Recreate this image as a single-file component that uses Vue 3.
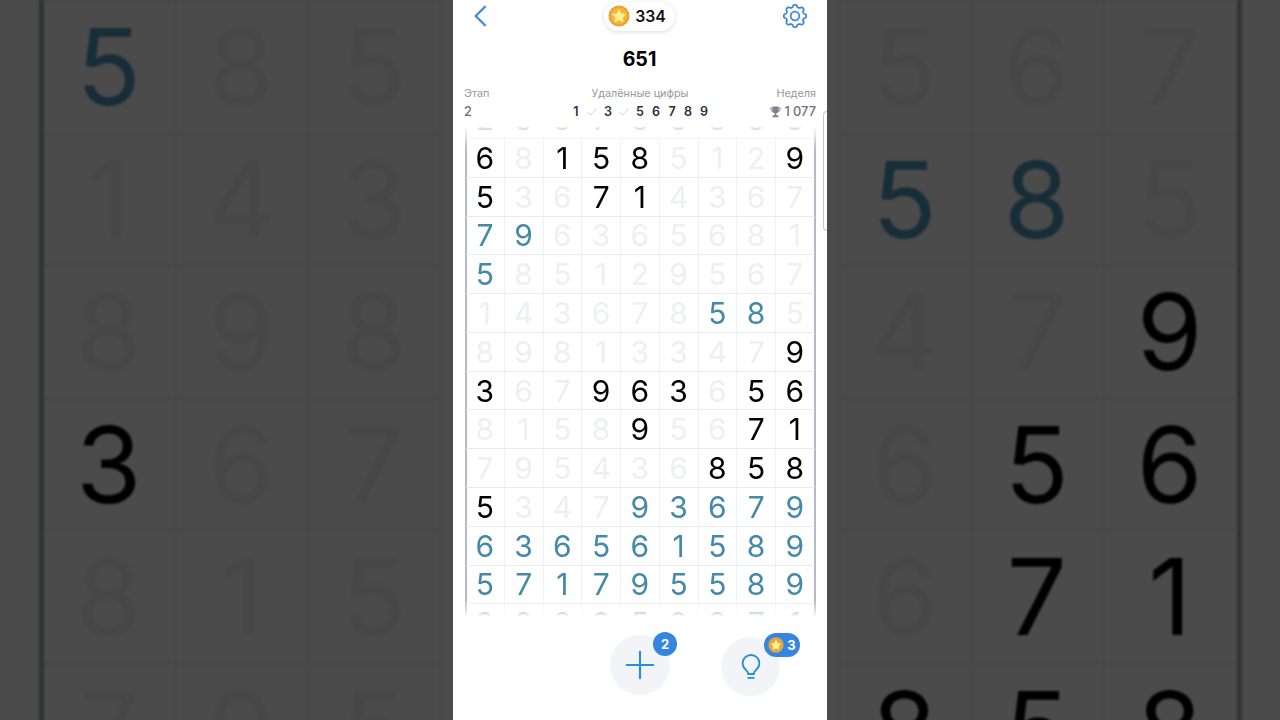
<template>
  <div class="stage">
    <!-- 左侧背景 -->
    <aside class="side side-left">
      <div class="side-board">
        <div v-for="(row, r) in leftRows" :key="r" class="side-row">
          <span v-for="(cell, c) in row" :key="c" class="side-cell" :class="cell.state">{{ cell.value }}</span>
        </div>
      </div>
    </aside>

    <main class="phone">
      <!-- 顶部 -->
      <header class="top-bar">
        <button class="icon-btn" aria-label="Назад">
          <svg width="14" height="22" viewBox="0 0 14 22" fill="none">
            <path d="M12 1.8L2.6 11L12 20.2" stroke="currentColor" stroke-width="2.3" stroke-linecap="round" stroke-linejoin="round" />
          </svg>
        </button>
        <div class="coins">
          <svg class="coin" viewBox="0 0 22 22">
            <circle cx="11" cy="11" r="10.5" fill="#eda12f" />
            <circle cx="11" cy="11" r="8.4" fill="#f3b53c" />
            <path :d="starPath" fill="#fff08a" stroke="#fff08a" stroke-width="1.4" stroke-linejoin="round" />
          </svg>
          <span>334</span>
        </div>
        <button class="icon-btn" aria-label="Настройки">
          <svg width="26" height="26" viewBox="-13 -13 26 26" fill="none" stroke="currentColor" stroke-width="1.8" stroke-linejoin="round">
            <path :d="gearPath" />
            <circle r="4.3" />
          </svg>
        </button>
      </header>

      <div class="score">651</div>

      <!-- 统计信息 -->
      <section class="stats">
        <div class="stat">
          <span class="label">Этап</span>
          <span class="value">2</span>
        </div>
        <div class="stat stat-center">
          <span class="label">Удалённые цифры</span>
          <div class="digits">
            <span v-for="d in digits" :key="d.value" class="digit">
              <svg v-if="d.removed" width="10" height="8" viewBox="0 0 10 8" fill="none">
                <path d="M1 4.4L3.6 7L9 1" stroke="#dfe3e8" stroke-width="1.2" stroke-linecap="round" />
              </svg>
              <template v-else>{{ d.value }}</template>
            </span>
          </div>
        </div>
        <div class="stat stat-right">
          <span class="label">Неделя</span>
          <span class="value trophy-value">
            <svg width="11" height="12" viewBox="0 0 11 12">
              <path d="M2.5 .5h6v1h2.2c0 2.6-.8 4-2.6 4.4-.4.9-1 1.4-1.8 1.6v1.7h1.4c.5 0 .8.4.8 1v1H2.5v-1c0-.6.3-1 .8-1h1.4V7.5C3.9 7.3 3.3 6.8 2.9 5.9 1.1 5.5.3 4.1.3 1.5h2.2z" fill="#7d828c" />
              <path d="M1.2 2.4h1.2v2.3C1.6 4.3 1.3 3.5 1.2 2.4zM9.8 2.4H8.6v2.3c.8-.4 1.1-1.2 1.2-2.3z" fill="#fff" />
            </svg>
            1 077
          </span>
        </div>
      </section>

      <!-- 棋盘 -->
      <section class="board">
        <div class="rows">
          <div v-for="(row, r) in rows" :key="r" class="row">
            <span v-for="(cell, c) in row" :key="c" class="cell" :class="cell.state">{{ cell.value }}</span>
          </div>
        </div>
      </section>

      <!-- 底部操作 -->
      <footer class="actions">
        <button class="round-btn" aria-label="Добавить">
          <svg width="30" height="30" viewBox="0 0 30 30" fill="none">
            <path d="M15 1.8v26.4M1.8 15h26.4" stroke="currentColor" stroke-width="2.1" stroke-linecap="round" />
          </svg>
          <span class="badge badge-add">2</span>
        </button>
        <button class="round-btn hint" aria-label="Подсказка">
          <svg width="20" height="26" viewBox="0 0 20 26" fill="none" stroke="currentColor" stroke-width="1.8" stroke-linecap="round" stroke-linejoin="round">
            <path d="M7 20v-1.2C6.4 16.4 1.6 14.6 1.6 9.4a8.400 8.400 0 0 1 16.800 0c0 5.200-4.800 7-5.400 9.400V20z" />
            <path d="M7.200 23.900h5.600" />
          </svg>
          <span class="badge badge-hint">
            <svg class="coin" viewBox="0 0 22 22">
              <circle cx="11" cy="11" r="10.5" fill="#e3a443" />
              <circle cx="11" cy="11" r="8.4" fill="#e0ac43" />
              <path :d="starPath" fill="#fff08a" stroke="#fff08a" stroke-width="1.4" stroke-linejoin="round" />
            </svg>
            3
          </span>
        </button>
      </footer>

      <div class="edge-handle"></div>
    </main>

    <!-- 右侧背景 -->
    <aside class="side side-right">
      <div class="side-board">
        <div v-for="(row, r) in rightRows" :key="r" class="side-row">
          <span v-for="(cell, c) in row" :key="c" class="side-cell" :class="cell.state">{{ cell.value }}</span>
        </div>
      </div>
    </aside>
  </div>
</template>

<script setup>
// k — чёрная, b — синяя, точка — зачёркнутая цифра
const field = [
  ['238738833', 'kkkkkkkkk'],
  ['681585129', 'k.kkk...k'],
  ['536714367', 'k..kk....'],
  ['796365681', 'bb.......'],
  ['585129567', 'b........'],
  ['143678585', '......bb.'],
  ['898133479', '........k'],
  ['367963656', 'k..kkk.kk'],
  ['815895671', '....k..kk'],
  ['795436858', '......kkk'],
  ['534793679', 'k...bbbbb'],
  ['636561589', 'bbbbbbbbb'],
  ['571795589', 'bbbbbbbbb'],
  ['393359371', 'bbbbbbbbb'],
]

const states = { k: 'open', b: 'added', '.': 'gone' }

const rows = field.map(([values, marks]) =>
  [...values].map((value, i) => ({ value, state: states[marks[i]] }))
)

const sideRows = rows.slice(4, 10)
const leftRows = sideRows.map((row) => row.slice(0, 3))
const rightRows = sideRows.map((row) => row.slice(6))

const digits = [1, 2, 3, 4, 5, 6, 7, 8, 9].map((value) => ({
  value,
  removed: value === 2 || value === 4,
}))

const starPath = 'M11 5.2l1.8 3.7 4 .6-2.9 2.9.7 4L11 14.5l-3.6 1.9.7-4L5.2 9.5l4-.6z'

// 8 зубцов по окружности
function buildGear(teeth, inner, outer) {
  const points = []
  const n = 160
  for (let i = 0; i < n; i++) {
    const a = (i / n) * Math.PI * 2
    const wave = Math.tanh(Math.cos(a * teeth) * 1.8) / Math.tanh(1.8)
    const rad = (inner + outer) / 2 + ((outer - inner) / 2) * wave
    points.push(`${(Math.sin(a) * rad).toFixed(2)} ${(-Math.cos(a) * rad).toFixed(2)}`)
  }
  return `M${points.join('L')}Z`
}
const gearPath = buildGear(8, 9, 11.2)
</script>

<style>
body {
  margin: 0;
  background: #4b4b4b;
}
</style>

<style scoped>
.stage {
  display: flex;
  width: 1280px;
  height: 720px;
  overflow: hidden;
  background: #4b4b4b;
  font-family: Inter, "Liberation Sans", sans-serif;
}

/* ---- 两侧放大的棋盘 ---- */
.side {
  width: 453px;
  height: 720px;
  overflow: hidden;
  display: flex;
  box-sizing: border-box;
}
.side-left {
  padding-left: 39px;
}
.side-right {
  padding-left: 11px;
}
.side-board {
  flex-shrink: 0;
  filter: blur(1px);
  margin-top: -1px;
  height: 797px;
}
.side-left .side-board {
  border-left: 5px solid #303339;
  border-right: 3px solid transparent;
}
.side-right .side-board {
  border-left: 3px solid #484848;
  border-right: 5px solid #303339;
}
.side-row {
  display: flex;
}
.side-cell {
  width: 132.5px;
  height: 132.5px;
  box-sizing: border-box;
  padding-top: 1px;
  border-right: 3px solid #484848;
  border-top: 3px solid #484848;
  display: flex;
  align-items: center;
  justify-content: center;
  font-size: 106px;
  line-height: 1;
}
.side-right .side-cell {
  width: 132.1px;
  padding-right: 2px;
}
.side-right .side-cell:last-child {
  padding-right: 0;
  border-right-color: transparent;
}
.side-cell.gone {
  color: #474747;
}
.side-cell.open {
  color: #000;
}
.side-cell.added {
  color: #172d38;
}

/* ---- 手机画面 ---- */
.phone {
  position: relative;
  width: 374px;
  height: 720px;
  flex-shrink: 0;
  background: #fff;
  display: flex;
  flex-direction: column;
}
.top-bar {
  display: flex;
  align-items: center;
  justify-content: space-between;
  height: 32px;
  padding: 0 19px 0 20px;
}
.icon-btn {
  display: flex;
  padding: 0;
  border: none;
  background: none;
  color: #3b8bdc;
  width: 26px;
}
.coins {
  display: flex;
  align-items: center;
  gap: 5px;
  height: 29px;
  padding: 0 9px 0 4px;
  margin-right: 2px;
  border-radius: 15px;
  background: #fff;
  box-shadow: 0 1px 4px rgba(60, 80, 100, 0.2);
  font-size: 15.8px;
  font-weight: 600;
  color: #111;
}
.coins .coin {
  width: 22px;
  height: 22px;
}
.score {
  height: 54px;
  line-height: 55px;
  padding-right: 1px;
  text-align: center;
  font-size: 19.6px;
  font-weight: 700;
  color: #000;
}

/* ---- 统计 ---- */
.stats {
  display: grid;
  grid-template-columns: 1fr auto 1fr;
  height: 41px;
  padding: 0 11px;
}
.stat {
  display: flex;
  flex-direction: column;
  color: #6b7078;
}
.stat-center {
  align-items: center;
}
.stat-right {
  align-items: flex-end;
}
.label {
  height: 16px;
  line-height: 16px;
  font-size: 10.8px;
  color: #9599a1;
}
.value {
  height: 19px;
  line-height: 19px;
  font-size: 12.8px;
  font-weight: 500;
}
.trophy-value {
  display: flex;
  align-items: center;
  gap: 3px;
}
.digits {
  display: flex;
  height: 19px;
}
.digit {
  width: 16px;
  height: 19px;
  line-height: 19px;
  display: flex;
  align-items: center;
  justify-content: center;
  font-size: 12.5px;
  font-weight: 600;
  color: #2b2f42;
}

/* ---- 棋盘 ---- */
.board {
  height: 491px;
  margin: 0 11px 0 12px;
  padding: 0 1px;
  overflow: hidden;
  display: flex;
  background:
    linear-gradient(#b4bac8, #b4bac8) left / 2px 100% no-repeat,
    linear-gradient(#b4bac8, #b4bac8) right / 2px 100% no-repeat;
  mask-image: linear-gradient(rgba(0, 0, 0, 0.06), rgba(0, 0, 0, 0.2) 4px, #000 22px, #000 474px, rgba(0, 0, 0, 0.4) 484px, transparent 490px);
}
.rows {
  margin-top: -26.8px;
}
.row {
  display: flex;
}
.cell {
  width: 38.75px;
  height: 38.79px;
  box-sizing: border-box;
  border-right: 1px solid #eef0f2;
  border-bottom: 1px solid #e9ebed;
  display: flex;
  align-items: center;
  justify-content: center;
  font-size: 30px;
  line-height: 1;
}
.cell:last-child {
  border-right-color: transparent;
}
.cell.gone {
  color: #eeeff1;
}
.cell.open {
  color: #000;
}
.cell.added {
  color: #4389a8;
}

/* ---- 底部 ---- */
.actions {
  display: flex;
  gap: 51px;
  padding: 17px 0 0 157px;
}
.round-btn {
  position: relative;
  display: flex;
  align-items: center;
  justify-content: center;
  width: 60px;
  height: 60px;
  padding: 0;
  border: none;
  border-radius: 50%;
  background: #f2f4f7;
  color: #2590d5;
  font-family: inherit;
}
.hint {
  width: 59px;
  height: 59px;
  margin-top: 2px;
}
.badge {
  position: absolute;
  top: -3px;
  height: 24px;
  display: flex;
  align-items: center;
  justify-content: center;
  border-radius: 12px;
  background: #3585e0;
  color: #fff;
  font-size: 13px;
  font-weight: 700;
}
.badge-add {
  left: 43px;
  width: 24px;
}
.badge-hint {
  top: -4px;
  left: 43px;
  width: 36px;
  gap: 3px;
}
.badge .coin {
  width: 16px;
  height: 16px;
}

/* 右侧边缘手柄 */
.edge-handle {
  position: absolute;
  top: 111px;
  right: 0;
  width: 3px;
  height: 118px;
  border: 1px solid #c6c9cd;
  border-right: none;
  border-radius: 4px 0 0 4px;
}
</style>
